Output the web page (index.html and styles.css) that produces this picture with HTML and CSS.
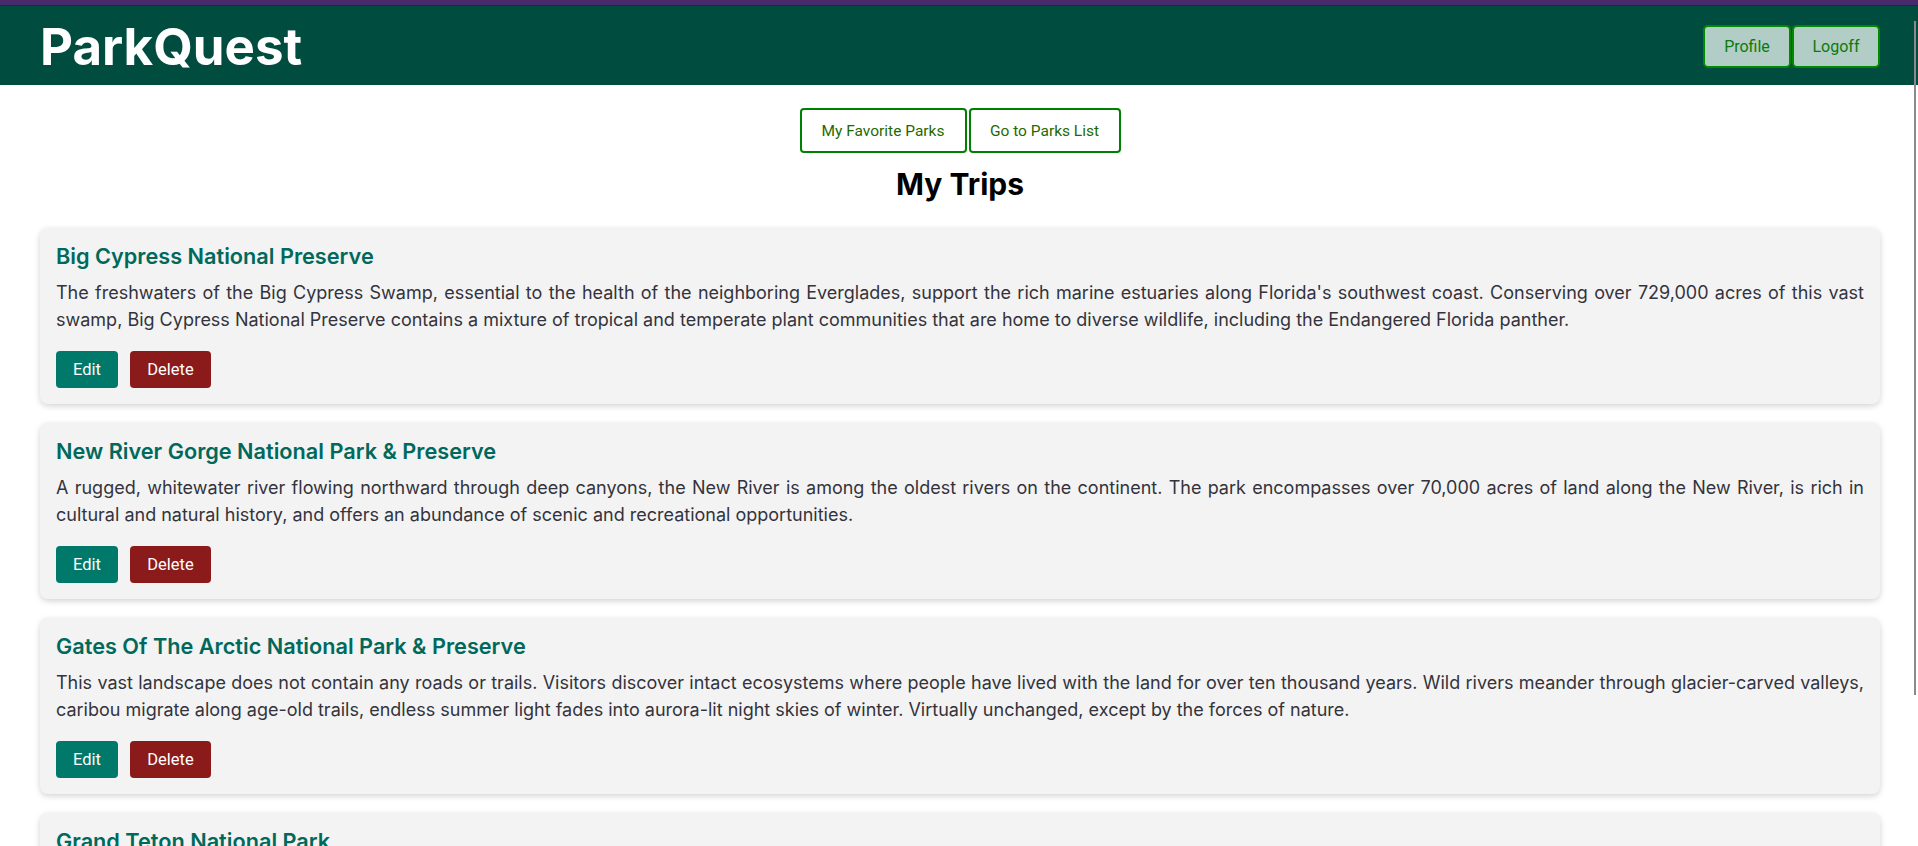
FILE: index.html
```html
<!DOCTYPE html>
<html lang="en">
<head>
<meta charset="utf-8">
<title>ParkQuest - My Trips</title>
<link rel="stylesheet" href="styles.css">
</head>
<body>
<div class="topbar"></div>
<header class="site-header">
  <h1 class="brand">ParkQuest</h1>
  <div class="header-actions">
    <button class="hdr-btn">Profile</button>
    <button class="hdr-btn">Logoff</button>
  </div>
</header>
<main class="page">
  <nav class="page-nav">
    <button class="nav-btn">My Favorite Parks</button>
    <button class="nav-btn">Go to Parks List</button>
  </nav>
  <h2 class="page-title">My Trips</h2>
  <section class="trips">
    <article class="trip-card">
      <h3 class="trip-name">Big Cypress National Preserve</h3>
      <p class="trip-desc">The freshwaters of the Big Cypress Swamp, essential to the health of the neighboring Everglades, support the rich marine estuaries along Florida's southwest coast. Conserving over 729,000 acres of this vast swamp, Big Cypress National Preserve contains a mixture of tropical and temperate plant communities that are home to diverse wildlife, including the Endangered Florida panther.</p>
      <div class="trip-actions">
        <button class="btn btn-edit">Edit</button>
        <button class="btn btn-delete">Delete</button>
      </div>
    </article>
    <article class="trip-card">
      <h3 class="trip-name">New River Gorge National Park &amp; Preserve</h3>
      <p class="trip-desc">A rugged, whitewater river flowing northward through deep canyons, the New River is among the oldest rivers on the continent. The park encompasses over 70,000 acres of land along the New River, is rich in cultural and natural history, and offers an abundance of scenic and recreational opportunities.</p>
      <div class="trip-actions">
        <button class="btn btn-edit">Edit</button>
        <button class="btn btn-delete">Delete</button>
      </div>
    </article>
    <article class="trip-card">
      <h3 class="trip-name">Gates Of The Arctic National Park &amp; Preserve</h3>
      <p class="trip-desc">This vast landscape does not contain any roads or trails. Visitors discover intact ecosystems where people have lived with the land for over ten thousand years. Wild rivers meander through glacier-carved valleys, caribou migrate along age-old trails, endless summer light fades into aurora-lit night skies of winter. Virtually unchanged, except by the forces of nature.</p>
      <div class="trip-actions">
        <button class="btn btn-edit">Edit</button>
        <button class="btn btn-delete">Delete</button>
      </div>
    </article>
    <article class="trip-card">
      <h3 class="trip-name">Grand Teton National Park</h3>
      <p class="trip-desc">Rising above a scene rich with extraordinary wildlife, pristine lakes, and alpine terrain, the Teton Range stands monument to the people who fought to protect it. These are mountains of the imagination. Mountains that led to the creation of Grand Teton National Park where you can explore over two hundred miles of trails, float the Snake River or enjoy the serenity of this remarkable place.</p>
      <div class="trip-actions">
        <button class="btn btn-edit">Edit</button>
        <button class="btn btn-delete">Delete</button>
      </div>
    </article>
  </section>
</main>
<div class="scroll-thumb"></div>
</body>
</html>
```
FILE: styles.css
```css
* { box-sizing: border-box; }
html, body { margin: 0; padding: 0; }
body {
  font-family: Inter, "Noto Sans", sans-serif;
  background: #ffffff;
  color: #333;
}
.topbar {
  height: 6px;
  background: #472b6d;
  border-bottom: 1px solid #2e1d4a;
}
.site-header {
  height: 79px;
  background: #004d40;
  display: flex;
  align-items: center;
  justify-content: space-between;
  padding: 0 38px 0 40px;
}
.brand {
  margin: 0;
  color: #ffffff;
  font-family: Inter, sans-serif;
  font-weight: 700;
  font-size: 51px;
  line-height: 1;
  padding-top: 2px;
}
.header-actions {
  display: flex;
  gap: 1px;
  padding-top: 2px;
}
.hdr-btn {
  height: 43px;
  width: 88px;
  background: #b2cdc5;
  border: 2px solid #008a00;
  border-radius: 5px;
  color: #0b7a0b;
  font-family: Roboto, sans-serif;
  font-size: 16px;
  padding: 0;
}
.page {
  padding: 0 38px 0 40px;
}
.page-nav {
  display: flex;
  justify-content: center;
  gap: 2px;
  padding-top: 23px;
}
.nav-btn {
  height: 45px;
  padding: 0 16px;
  background: #ffffff;
  border: 2px solid #008000;
  border-radius: 4px;
  color: #1f6a00;
  font-family: Roboto, sans-serif;
  font-size: 15.5px;
}
.nav-btn:first-child { width: 167px; }
.nav-btn:last-child { width: 152px; }
.page-title {
  margin: 12px 0 25px;
  height: 38px;
  line-height: 38px;
  text-align: center;
  font-size: 30px;
  font-weight: 700;
  color: #000;
}
.trips {
  display: flex;
  flex-direction: column;
  gap: 19px;
}
.trip-card {
  background: #f3f3f3;
  border-radius: 8px;
  box-shadow: 0 2px 6px rgba(0,0,0,0.18);
  padding: 15px 16px 16px;
}
.trip-name {
  margin: 0 0 10px;
  font-size: 21.7px;
  font-weight: 600;
  color: #00695c;
}
.trip-desc {
  margin: 0 0 18px;
  font-size: 18px;
  line-height: 27px;
  text-align: justify;
  color: #33333d;
}
.trip-actions {
  display: flex;
  gap: 12px;
}
.btn {
  height: 37px;
  padding: 0;
  border: none;
  border-radius: 4px;
  color: #fff;
  font-family: Roboto, sans-serif;
  font-size: 16.5px;
}
.btn-edit { background: #00796b; width: 62px; }
.btn-delete { background: #8b1a1a; width: 81px; }
.scroll-thumb {
  position: fixed;
  top: 21px;
  right: 2px;
  width: 2px;
  height: 674px;
  background: #8a8a8a;
}
```
